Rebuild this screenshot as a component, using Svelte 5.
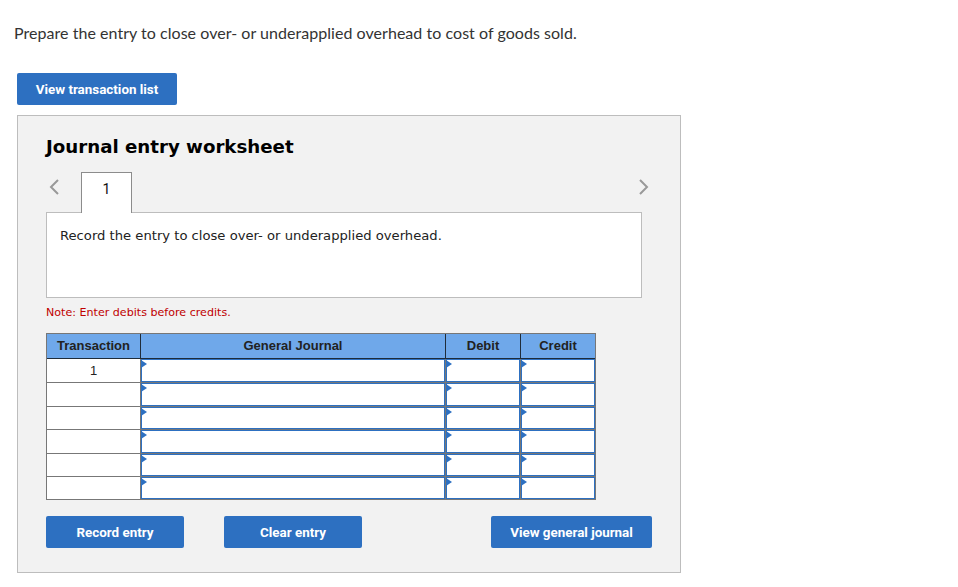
<script lang="ts">
  const rows = ["1", "", "", "", "", ""];
  const cols = [0, 1, 2];
</script>

<main class="page">
  <p class="prompt">Prepare the entry to close over- or underapplied overhead to cost of goods sold.</p>
  <button type="button" class="btn list-btn">View transaction list</button>

  <section class="panel">
    <h2>Journal entry worksheet</h2>

    <div class="tabs">
      <svg class="arrow" width="12" height="18" viewBox="0 0 12 18" aria-hidden="true">
        <path d="M10 2 L3 9 L10 16" />
      </svg>
      <div class="tab">1</div>
      <svg class="arrow next" width="12" height="18" viewBox="0 0 12 18" aria-hidden="true">
        <path d="M2 2 L9 9 L2 16" />
      </svg>
    </div>

    <div class="desc">Record the entry to close over- or underapplied overhead.</div>
    <p class="note">Note: Enter debits before credits.</p>

    <div class="sheet">
      <div class="grid head">
        <div>Transaction</div>
        <div>General Journal</div>
        <div>Debit</div>
        <div>Credit</div>
      </div>
      <div class="grid body">
        {#each rows as id}
          <div class="id">{id}</div>
          {#each cols as c (c)}
            <div class="input"></div>
          {/each}
        {/each}
      </div>
    </div>

    <div class="actions">
      <button type="button" class="btn record">Record entry</button>
      <button type="button" class="btn clear">Clear entry</button>
      <button type="button" class="btn journal">View general journal</button>
    </div>
  </section>
</main>

<style>
  :global(body) {
    margin: 0;
    background: #fff;
  }

  .page {
    width: 958px;
    height: 587px;
    box-sizing: border-box;
    padding: 23px 0 0 17px;
    overflow: hidden;
  }

  .prompt {
    margin: 0 0 0 -3px;
    font-family: Lato, sans-serif;
    font-size: 16px;
    letter-spacing: 0.04px;
    line-height: 20px;
    color: #333;
  }

  .btn {
    display: block;
    height: 32px;
    padding: 0;
    border: none;
    border-radius: 2px;
    background: #2d70c1;
    color: #fff;
    font-family: Roboto, sans-serif;
    font-size: 13.4px;
    font-weight: 700;
    cursor: pointer;
  }

  .list-btn {
    width: 160px;
    margin-top: 30px;
  }

  .panel {
    width: 664px;
    height: 458px;
    box-sizing: border-box;
    margin-top: 10px;
    padding: 19px 0 0 28px;
    background: #f2f2f2;
    border: 1px solid #bdbdbd;
  }

  h2 {
    margin: 0;
    font-family: "DejaVu Sans", sans-serif;
    font-size: 18.2px;
    font-weight: 700;
    line-height: 24px;
    color: #000;
  }

  .tabs {
    display: flex;
    align-items: center;
    width: 596px;
    height: 41px;
    margin-top: 13px;
  }

  .arrow {
    flex-shrink: 0;
    margin-left: 2px;
    margin-top: -11px;
  }

  .arrow path {
    fill: none;
    stroke: #999;
    stroke-width: 2;
  }

  .arrow.next {
    margin-left: auto;
    margin-right: -8px;
  }

  .tab {
    width: 51px;
    height: 41px;
    box-sizing: border-box;
    margin-left: 21px;
    padding-top: 6px;
    position: relative;
    z-index: 1;
    background: #fff;
    border: 1px solid #8c8c8c;
    border-bottom: none;
    text-align: center;
    font-family: Roboto, sans-serif;
    font-size: 14px;
    line-height: 20px;
    color: #111;
  }

  .desc {
    width: 596px;
    height: 86px;
    box-sizing: border-box;
    margin-top: -1px;
    padding: 15px 13px;
    background: #fff;
    border: 1px solid #bdbdbd;
    font-family: "DejaVu Sans", sans-serif;
    font-size: 13.15px;
    line-height: 16px;
    color: #222;
  }

  .note {
    margin: 8px 0 0;
    font-family: "DejaVu Sans", sans-serif;
    font-size: 11.1px;
    line-height: 14px;
    color: #c00000;
  }

  .sheet {
    width: 550px;
    box-sizing: border-box;
    margin-top: 13px;
    border: 1px solid #777;
    font-family: "Liberation Sans", sans-serif;
    font-size: 13px;
    color: #222;
  }

  .grid {
    display: grid;
    grid-template-columns: 93px 304px 74px 74px;
    column-gap: 1px;
  }

  .head {
    grid-template-rows: 24px;
    background: #1f2c3a;
    border-bottom: 1px solid #1f2c3a;
    font-weight: 700;
    text-align: center;
  }

  .head > div {
    background: #6fa8ea;
    line-height: 24px;
  }

  .body {
    grid-template-rows: 23px 23px 22px 23px 22px 22px;
    row-gap: 1px;
    background: #777;
  }

  .id {
    background: #fff;
    text-align: center;
    line-height: 23px;
  }

  .input {
    position: relative;
    background: #fff;
    border: 1px solid #2d70c1;
  }

  .input::before {
    content: "";
    position: absolute;
    left: -1px;
    top: 0;
    border-left: 6px solid #2d70c1;
    border-top: 4px solid transparent;
    border-bottom: 4px solid transparent;
  }

  .actions {
    display: flex;
    width: 606px;
    margin-top: 16px;
  }

  .record,
  .clear {
    width: 138px;
  }

  .clear {
    margin-left: 40px;
  }

  .journal {
    width: 161px;
    margin-left: auto;
  }
</style>
